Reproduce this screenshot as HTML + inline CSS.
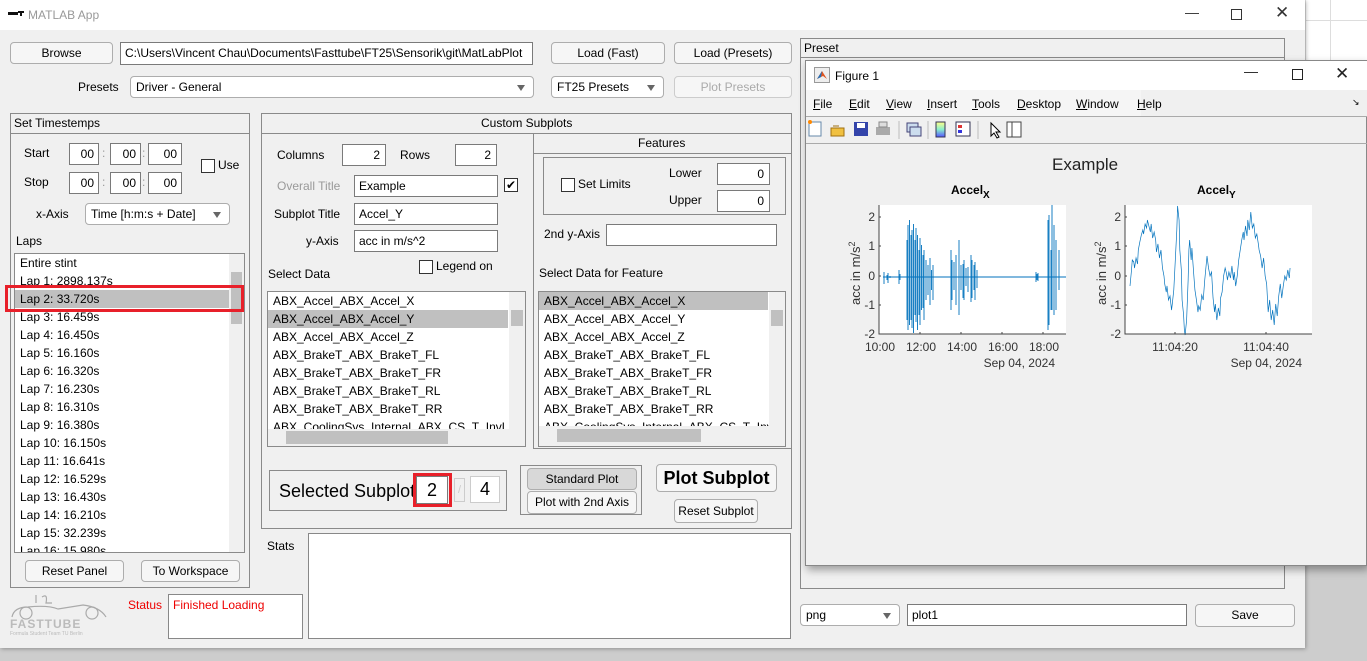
<!DOCTYPE html>
<html><head><meta charset="utf-8"><style>
*{box-sizing:border-box;margin:0;padding:0}
body{width:1367px;height:661px;overflow:hidden;background:#cdcdcd;font-family:"Liberation Sans",sans-serif;font-size:12px;color:#000;position:relative}
.a{position:absolute}
.btn{position:absolute;border:1px solid #adadad;border-radius:4px;background:#f6f6f6;text-align:center;font-size:12px}
.inp{position:absolute;background:#fff;border:1px solid #7a7a7a;font-size:12px;padding-left:4px;white-space:nowrap;overflow:hidden}
.dd{position:absolute;border:1px solid #adadad;border-radius:4px;background:#fff;padding-left:5px;font-size:12px}
.dd:after{content:"";position:absolute;right:8px;top:50%;margin-top:-2px;border-left:4px solid transparent;border-right:4px solid transparent;border-top:6px solid #666}
.pan{position:absolute;border:1px solid #8a8a8a}
.lbl{position:absolute;white-space:nowrap}
.list{position:absolute;background:#fff;border:1px solid #8a8a8a;overflow:hidden}
.list div{height:18px;line-height:18px;padding-left:5px;white-space:nowrap}
.sel{background:#c0c0c0}
.cb{position:absolute;width:14px;height:14px;border:1px solid #333;background:#fff}
</style></head><body>
<div class="a" style="left:1305px;top:0;width:62px;height:60px;background:#fff;border-left:1px solid #ddd"></div>
<div class="a" style="left:1330px;top:0;width:1px;height:60px;background:#ddd"></div>
<div class="a" style="left:1305px;top:20px;width:62px;height:1px;background:#ddd"></div>
<div class="a" style="left:0;top:0;width:1305px;height:648px;background:#f0f0f0;box-shadow:1px 1px 4px rgba(0,0,0,.3)"></div>
<div class="a" style="left:0;top:0;width:1305px;height:30px;background:#fff"></div>
<div class="a" style="left:8px;top:12px;width:10px;height:3px;background:#111"></div>
<div class="a" style="left:18px;top:11px;width:6px;height:2px;background:#111"></div><div class="a" style="left:20px;top:11px;width:2px;height:5px;background:#111"></div>
<div class="lbl" style="left:28px;top:8px;color:#999">MATLAB App</div>
<div class="lbl" style="left:1185px;top:4px;color:#333;font-size:14px">&#8212;</div>
<div class="a" style="left:1231px;top:9px;width:11px;height:11px;border:1px solid #333"></div>
<div class="lbl" style="left:1275px;top:3px;font-size:17px;color:#333">&#10005;</div>

<div class="btn" style="left:10px;top:42px;width:103px;height:22px;line-height:20px">Browse</div>
<div class="inp" style="left:120px;top:42px;width:413px;height:23px;line-height:21px">C:\Users\Vincent Chau\Documents\Fasttube\FT25\Sensorik\git\MatLabPlot</div>
<div class="btn" style="left:551px;top:42px;width:114px;height:22px;line-height:20px">Load (Fast)</div>
<div class="btn" style="left:674px;top:42px;width:118px;height:22px;line-height:20px">Load (Presets)</div>
<div class="lbl" style="left:78px;top:80px">Presets</div>
<div class="dd" style="left:130px;top:76px;width:404px;height:22px;line-height:20px">Driver - General</div>
<div class="dd" style="left:551px;top:76px;width:113px;height:22px;line-height:20px">FT25 Presets</div>
<div class="btn" style="left:674px;top:76px;width:118px;height:22px;line-height:20px;color:#aaa;border-color:#ccc">Plot Presets</div>

<div class="pan" style="left:10px;top:113px;width:240px;height:475px"></div>
<div class="a" style="left:10px;top:133px;width:240px;height:1px;background:#8a8a8a"></div>
<div class="lbl" style="left:14px;top:116px">Set Timestemps</div>
<div class="lbl" style="left:24px;top:146px">Start</div>
<div class="lbl" style="left:24px;top:175px">Stop</div>
<div class="inp" style="left:69px;top:143px;width:30px;height:22px;line-height:20px;text-align:right;padding-right:4px">00</div>
<div class="inp" style="left:110px;top:143px;width:31px;height:22px;line-height:20px;text-align:right;padding-right:4px">00</div>
<div class="inp" style="left:148px;top:143px;width:34px;height:22px;line-height:20px;text-align:right;padding-right:4px">00</div>
<div class="inp" style="left:69px;top:172px;width:30px;height:22px;line-height:20px;text-align:right;padding-right:4px">00</div>
<div class="inp" style="left:110px;top:172px;width:31px;height:22px;line-height:20px;text-align:right;padding-right:4px">00</div>
<div class="inp" style="left:148px;top:172px;width:34px;height:22px;line-height:20px;text-align:right;padding-right:4px">00</div>
<div class="lbl" style="left:102px;top:146px;color:#999">:</div><div class="lbl" style="left:142px;top:146px;color:#999">:</div>
<div class="lbl" style="left:102px;top:175px;color:#999">:</div><div class="lbl" style="left:142px;top:175px;color:#999">:</div>
<div class="cb" style="left:201px;top:159px"></div><div class="lbl" style="left:218px;top:158px">Use</div>
<div class="lbl" style="left:36px;top:207px">x-Axis</div>
<div class="dd" style="left:85px;top:203px;width:145px;height:22px;line-height:20px">Time [h:m:s + Date]</div>
<div class="lbl" style="left:16px;top:234px">Laps</div>
<div class="list" style="left:14px;top:253px;width:231px;height:300px">
<div>Entire stint</div><div>Lap 1: 2898.137s</div><div class="sel" style="margin-right:15px">Lap 2: 33.720s</div><div>Lap 3: 16.459s</div><div>Lap 4: 16.450s</div><div>Lap 5: 16.160s</div><div>Lap 6: 16.320s</div><div>Lap 7: 16.230s</div><div>Lap 8: 16.310s</div><div>Lap 9: 16.380s</div><div>Lap 10: 16.150s</div><div>Lap 11: 16.641s</div><div>Lap 12: 16.529s</div><div>Lap 13: 16.430s</div><div>Lap 14: 16.210s</div><div>Lap 15: 32.239s</div><div>Lap 16: 15.980s</div>
<span class="a" style="right:0;top:0;width:15px;height:298px;background:#f0f0f0"></span>
<span class="a" style="right:2px;top:18px;width:11px;height:52px;background:#c0c0c0"></span>
</div>
<div class="a" style="left:5px;top:285px;width:239px;height:27px;border:3px solid #e8202a"></div>
<div class="btn" style="left:25px;top:560px;width:99px;height:22px;line-height:20px">Reset Panel</div>
<div class="btn" style="left:141px;top:560px;width:99px;height:22px;line-height:20px">To Workspace</div>
<svg class="a" style="left:8px;top:593px" width="104" height="42"><g fill="none" stroke="#aaa" stroke-width="1.2"><path d="M4 24 Q6 14 20 14 Q40 12 50 16 L75 12 Q92 14 98 24"/><circle cx="18" cy="20" r="6"/><circle cx="84" cy="20" r="6"/><path d="M28 2 L28 10 M34 4 Q40 0 38 10 L44 10"/></g><text x="2" y="35" font-size="12" font-weight="bold" fill="#bbb" font-family="Liberation Sans" letter-spacing="1">FASTTUBE</text><text x="2" y="42" font-size="5" fill="#bbb" font-family="Liberation Sans">Formula Student Team TU Berlin</text></svg>
<div class="lbl" style="left:128px;top:598px;color:#e00">Status</div>
<div class="inp" style="left:168px;top:594px;width:135px;height:45px;padding-top:3px;color:#e00;border-color:#888">Finished Loading</div>

<div class="pan" style="left:261px;top:113px;width:531px;height:416px"></div>
<div class="a" style="left:261px;top:133px;width:531px;height:1px;background:#8a8a8a"></div>
<div class="lbl" style="left:481px;top:116px">Custom Subplots</div>
<div class="lbl" style="left:277px;top:148px">Columns</div>
<div class="inp" style="left:342px;top:144px;width:44px;height:22px;line-height:20px;text-align:right;padding-right:5px">2</div>
<div class="lbl" style="left:400px;top:148px">Rows</div>
<div class="inp" style="left:455px;top:144px;width:42px;height:22px;line-height:20px;text-align:right;padding-right:5px">2</div>
<div class="lbl" style="left:277px;top:179px;color:#999">Overall Title</div>
<div class="inp" style="left:354px;top:175px;width:144px;height:22px;line-height:20px">Example</div>
<div class="cb" style="left:504px;top:178px;text-align:center;line-height:12px;font-size:12px">&#10004;</div>
<div class="lbl" style="left:274px;top:207px">Subplot Title</div>
<div class="inp" style="left:354px;top:203px;width:144px;height:22px;line-height:20px">Accel_Y</div>
<div class="lbl" style="left:306px;top:234px">y-Axis</div>
<div class="inp" style="left:354px;top:230px;width:144px;height:22px;line-height:20px">acc in m/s^2</div>
<div class="cb" style="left:419px;top:260px"></div><div class="lbl" style="left:436px;top:259px">Legend on</div>
<div class="lbl" style="left:268px;top:267px">Select Data</div>
<div class="list" style="left:267px;top:291px;width:259px;height:156px">
<div>ABX_Accel_ABX_Accel_X</div><div class="sel" style="margin-right:17px">ABX_Accel_ABX_Accel_Y</div><div>ABX_Accel_ABX_Accel_Z</div><div>ABX_BrakeT_ABX_BrakeT_FL</div><div>ABX_BrakeT_ABX_BrakeT_FR</div><div>ABX_BrakeT_ABX_BrakeT_RL</div><div>ABX_BrakeT_ABX_BrakeT_RR</div><div>ABX_CoolingSys_Internal_ABX_CS_T_InvL</div>
<span class="a" style="right:0;top:0;width:16px;height:155px;background:#f0f0f0"></span>
<span class="a" style="right:2px;top:18px;width:12px;height:16px;background:#c0c0c0"></span>
<span class="a" style="left:0;bottom:0;width:258px;height:17px;background:#f0f0f0"></span>
<span class="a" style="left:18px;bottom:2px;width:162px;height:13px;background:#c0c0c0"></span>
</div>
<div class="pan" style="left:533px;top:133px;width:259px;height:316px"></div>
<div class="a" style="left:533px;top:153px;width:259px;height:1px;background:#8a8a8a"></div>
<div class="lbl" style="left:638px;top:136px">Features</div>
<div class="pan" style="left:543px;top:157px;width:243px;height:58px"></div>
<div class="cb" style="left:561px;top:178px"></div><div class="lbl" style="left:578px;top:177px">Set Limits</div>
<div class="lbl" style="left:669px;top:166px">Lower</div><div class="lbl" style="left:669px;top:193px">Upper</div>
<div class="inp" style="left:717px;top:163px;width:53px;height:22px;line-height:20px;text-align:right;padding-right:5px">0</div>
<div class="inp" style="left:717px;top:190px;width:53px;height:22px;line-height:20px;text-align:right;padding-right:5px">0</div>
<div class="lbl" style="left:544px;top:227px">2nd y-Axis</div>
<div class="inp" style="left:606px;top:224px;width:171px;height:22px"></div>
<div class="lbl" style="left:539px;top:266px">Select Data for Feature</div>
<div class="list" style="left:538px;top:291px;width:248px;height:156px">
<div class="sel" style="margin-right:17px">ABX_Accel_ABX_Accel_X</div><div>ABX_Accel_ABX_Accel_Y</div><div>ABX_Accel_ABX_Accel_Z</div><div>ABX_BrakeT_ABX_BrakeT_FL</div><div>ABX_BrakeT_ABX_BrakeT_FR</div><div>ABX_BrakeT_ABX_BrakeT_RL</div><div>ABX_BrakeT_ABX_BrakeT_RR</div><div>ABX_CoolingSys_Internal_ABX_CS_T_InvL</div>
<span class="a" style="right:0;top:0;width:16px;height:155px;background:#f0f0f0"></span>
<span class="a" style="right:2px;top:18px;width:12px;height:16px;background:#c0c0c0"></span>
<span class="a" style="left:0;bottom:0;width:247px;height:20px;background:#f0f0f0"></span>
<span class="a" style="left:18px;bottom:4px;width:144px;height:13px;background:#c0c0c0"></span>
</div>
<div class="pan" style="left:269px;top:470px;width:238px;height:41px"></div>
<div class="lbl" style="left:279px;top:481px;font-size:18px">Selected Subplot</div>
<div class="inp" style="left:416px;top:476px;width:32px;height:28px;line-height:26px;font-size:18px;text-align:center;padding:0">2</div>
<div class="a" style="left:413px;top:473px;width:39px;height:34px;border:3px solid #e8202a"></div>
<div class="a" style="left:454px;top:478px;width:11px;height:24px;border:1px solid #ccc;color:#ccc;font-size:11px;text-align:center;line-height:22px">/</div>
<div class="inp" style="left:470px;top:476px;width:30px;height:27px;line-height:25px;font-size:18px;text-align:center;padding:0;border-color:#ccc">4</div>
<div class="pan" style="left:520px;top:465px;width:122px;height:50px"></div>
<div class="btn" style="left:527px;top:468px;width:110px;height:22px;line-height:20px;background:#d8d8d8">Standard Plot</div>
<div class="btn" style="left:527px;top:491px;width:110px;height:23px;line-height:21px">Plot with 2nd Axis</div>
<div class="btn" style="left:656px;top:464px;width:121px;height:28px;line-height:26px;font-size:18px;font-weight:bold">Plot Subplot</div>
<div class="btn" style="left:674px;top:499px;width:84px;height:24px;line-height:22px">Reset Subplot</div>
<div class="lbl" style="left:267px;top:539px">Stats</div>
<div class="inp" style="left:308px;top:533px;width:483px;height:106px;border-color:#888"></div>

<div class="pan" style="left:800px;top:38px;width:485px;height:551px"></div>
<div class="a" style="left:800px;top:57px;width:485px;height:1px;background:#8a8a8a"></div>
<div class="lbl" style="left:804px;top:41px">Preset</div>
<div class="dd" style="left:800px;top:604px;width:100px;height:22px;line-height:20px">png</div>
<div class="inp" style="left:907px;top:604px;width:280px;height:22px;line-height:20px">plot1</div>
<div class="btn" style="left:1195px;top:604px;width:100px;height:23px;line-height:21px">Save</div>

<div class="a" style="left:805px;top:60px;width:562px;height:506px;background:#f0f0f0;border:1px solid #888;box-shadow:2px 4px 8px rgba(0,0,0,.35)"></div>
<div class="a" style="left:806px;top:61px;width:561px;height:29px;background:#fff"></div>
<svg class="a" style="left:814px;top:67px" width="16" height="16"><rect x=".5" y=".5" width="15" height="15" fill="#eee" stroke="#999"/><path d="M3 12 L8 4 L13 12 L9 9Z" fill="#e0541e"/><path d="M3 12 L8 4 L7 10Z" fill="#2470b8"/></svg>
<div class="lbl" style="left:835px;top:69px">Figure 1</div>
<div class="lbl" style="left:1244px;top:63px;font-size:14px;color:#222">&#8212;</div>
<div class="a" style="left:1292px;top:69px;width:11px;height:11px;border:1px solid #222"></div>
<div class="lbl" style="left:1335px;top:64px;font-size:17px;color:#222">&#10005;</div>
<div class="a" style="left:806px;top:90px;width:561px;height:27px;background:#f0f0f0;border-bottom:1px solid #aaa"></div>
<div class="a" style="left:806px;top:90px;width:335px;height:26px;background:#f5f5f5"></div>
<div class="lbl" style="left:813px;top:97px"><u>F</u>ile</div>
<div class="lbl" style="left:849px;top:97px"><u>E</u>dit</div>
<div class="lbl" style="left:886px;top:97px"><u>V</u>iew</div>
<div class="lbl" style="left:927px;top:97px"><u>I</u>nsert</div>
<div class="lbl" style="left:972px;top:97px"><u>T</u>ools</div>
<div class="lbl" style="left:1017px;top:97px"><u>D</u>esktop</div>
<div class="lbl" style="left:1076px;top:97px"><u>W</u>indow</div>
<div class="lbl" style="left:1137px;top:97px"><u>H</u>elp</div>
<div class="lbl" style="left:1352px;top:97px;font-size:9px">&#8600;</div>
<div class="a" style="left:806px;top:143px;width:561px;height:1px;background:#aaa"></div>
<svg class="a" style="left:806px;top:118px" width="240" height="24">
<rect x="3" y="4" width="12" height="14" fill="#fff" stroke="#6688aa"/><circle cx="4" cy="4" r="2" fill="#f80"/>
<path d="M25 10 h13 v8 h-13z" fill="#f0c040" stroke="#a07010"/><path d="M27 8 h6" stroke="#a07010"/>
<rect x="48" y="4" width="14" height="14" fill="#3344aa"/><rect x="51" y="5" width="8" height="5" fill="#fff"/>
<rect x="70" y="9" width="14" height="8" fill="#aaa"/><rect x="73" y="4" width="8" height="5" fill="#ddd" stroke="#888"/>
<line x1="93" y1="3" x2="93" y2="21" stroke="#bbb"/>
<rect x="101" y="5" width="11" height="9" fill="#cde" stroke="#447"/><rect x="104" y="9" width="11" height="9" fill="#cde" stroke="#447"/>
<line x1="122" y1="3" x2="122" y2="21" stroke="#bbb"/>
<defs><linearGradient id="g" x1="0" y1="0" x2="0" y2="1"><stop offset="0" stop-color="#ff8"/><stop offset=".5" stop-color="#8ec"/><stop offset="1" stop-color="#55f"/></linearGradient></defs>
<rect x="130" y="4" width="9" height="15" fill="url(#g)" stroke="#335"/>
<rect x="150" y="4" width="14" height="14" fill="#fff" stroke="#335"/><rect x="152" y="7" width="4" height="3" fill="#d33"/><rect x="152" y="12" width="4" height="3" fill="#33d"/>
<line x1="172" y1="3" x2="172" y2="21" stroke="#bbb"/>
<path d="M185 5 L185 18 L188 15 L191 20 L193 19 L190 14 L194 14Z" fill="#fff" stroke="#000"/>
<rect x="201" y="4" width="14" height="15" fill="#fff" stroke="#444"/><line x1="206" y1="4" x2="206" y2="19" stroke="#444"/>
</svg>
<div class="lbl" style="left:1052px;top:155px;font-size:17px;color:#222">Example</div>
<svg class="a" style="left:830px;top:180px" width="537" height="200" font-family="Liberation Sans" font-size="12" fill="#333">
<text x="121" y="14" font-weight="bold" fill="#000">Accel<tspan font-size="10" dy="4">X</tspan></text>
<text x="367" y="14" font-weight="bold" fill="#000">Accel<tspan font-size="10" dy="4">Y</tspan></text>
<rect x="49" y="25" width="187" height="129" fill="#fff"/>
<rect x="295" y="25" width="187" height="129" fill="#fff"/>
<g fill="none" stroke="#0072bd" stroke-width="0.9">
<path d="M53 97 H236 M54 92 V104 M57 95 V100 M58 93 V103 M60 96 V98"/>
<path d="M69 90V104M70 94V100M77 60V140M78 45V150M79.5 40V145M81 55V140M82 50V148M83.5 44V153M85 60V135M86 48V142M87.5 55V150M89 70V135M90 58V145M91.5 65V130M93 75V128M94 70V140M96 80V120M98 85V115M100 78V125M101.5 90V110M103 85V120"/>
<path d="M121 70V130M122 80V120M124 82V110M126 75V125M129 60V135M131 85V110M133 84V118M134 80V120M136 88V106M138 87V112M141 75V122M142 80V118M144 85V110M145 82V120M147 90V108"/>
<path d="M206 92V102M207 94V100M208 93V101"/>
<path d="M218 40V150M219 35V145M221 70V130M222 25V130M224 45V135M226 60V130M229 70V110"/>
<path transform="translate(300,0) scale(0.755,1) translate(-300,0)" d="M300 106 L302 90 L303 80 L305 82 L306 88 L308 78 L310 84 L311 70 L313 62 L315 55 L317 50 L318 54 L320 44 L322 48 L323 40 L325 46 L327 52 L328 44 L330 58 L332 52 L334 60 L335 72 L337 64 L339 78 L341 70 L343 88 L345 96 L346 104 L348 112 L349 106 L351 120 L353 116 L355 130 L356 124 L358 110 L360 80 L362 50 L363 26 L365 40 L366 70 L368 90 L369 120 L371 135 L372 150 L373 155 L375 140 L377 100 L378 70 L379 60 L381 80 L382 68 L384 90 L386 110 L388 120 L390 132 L391 126 L393 130 L395 115 L397 120 L399 100 L401 84 L402 76 L404 88 L406 96 L408 92 L410 118 L412 132 L413 124 L415 140 L417 128 L419 136 L420 118 L422 112 L424 96 L426 88 L428 94 L429 100 L431 92 L433 98 L435 86 L437 100 L438 92 L440 106 L442 96 L444 80 L446 70 L448 60 L450 52 L451 60 L453 46 L455 56 L456 40 L458 50 L460 32 L462 48 L464 44 L466 58 L468 54 L470 64 L471 70 L473 76 L475 88 L477 78 L479 96 L481 104 L483 132 L485 120 L487 140 L489 130 L491 145 L493 124 L495 136 L497 116 L499 104 L501 118 L503 106 L505 96 L507 100 L509 90 L511 98 L512 88"/>
</g>
<path d="M49 25 V154 H236" fill="none" stroke="#444"/>
<path d="M295 25 V154 H482" fill="none" stroke="#444"/>
<g stroke="#444"><path d="M49 37 h2 M49 66 h2 M49 96 h2 M49 125 h2 M49 154 h2 M90 154 v-2 M131 154 v-2 M172 154 v-2 M213 154 v-2"/><path d="M295 37 h2 M295 66 h2 M295 96 h2 M295 125 h2 M295 154 h2 M345 154 v-2 M436 154 v-2"/></g>
<g text-anchor="end"><text x="45" y="41">2</text><text x="45" y="70">1</text><text x="45" y="100">0</text><text x="45" y="129">-1</text><text x="45" y="158">-2</text>
<text x="291" y="41">2</text><text x="291" y="70">1</text><text x="291" y="100">0</text><text x="291" y="129">-1</text><text x="291" y="158">-2</text></g>
<g text-anchor="middle"><text x="50" y="171">10:00</text><text x="91" y="171">12:00</text><text x="132" y="171">14:00</text><text x="173" y="171">16:00</text><text x="214" y="171">18:00</text>
<text x="345" y="171">11:04:20</text><text x="436" y="171">11:04:40</text></g>
<text x="225" y="187" text-anchor="end">Sep 04, 2024</text>
<text x="472" y="187" text-anchor="end">Sep 04, 2024</text>
<text transform="translate(30,125) rotate(-90)" font-size="13">acc in m/s<tspan font-size="9" dy="-5">2</tspan></text>
<text transform="translate(276,125) rotate(-90)" font-size="13">acc in m/s<tspan font-size="9" dy="-5">2</tspan></text>
</svg>
</body></html>
